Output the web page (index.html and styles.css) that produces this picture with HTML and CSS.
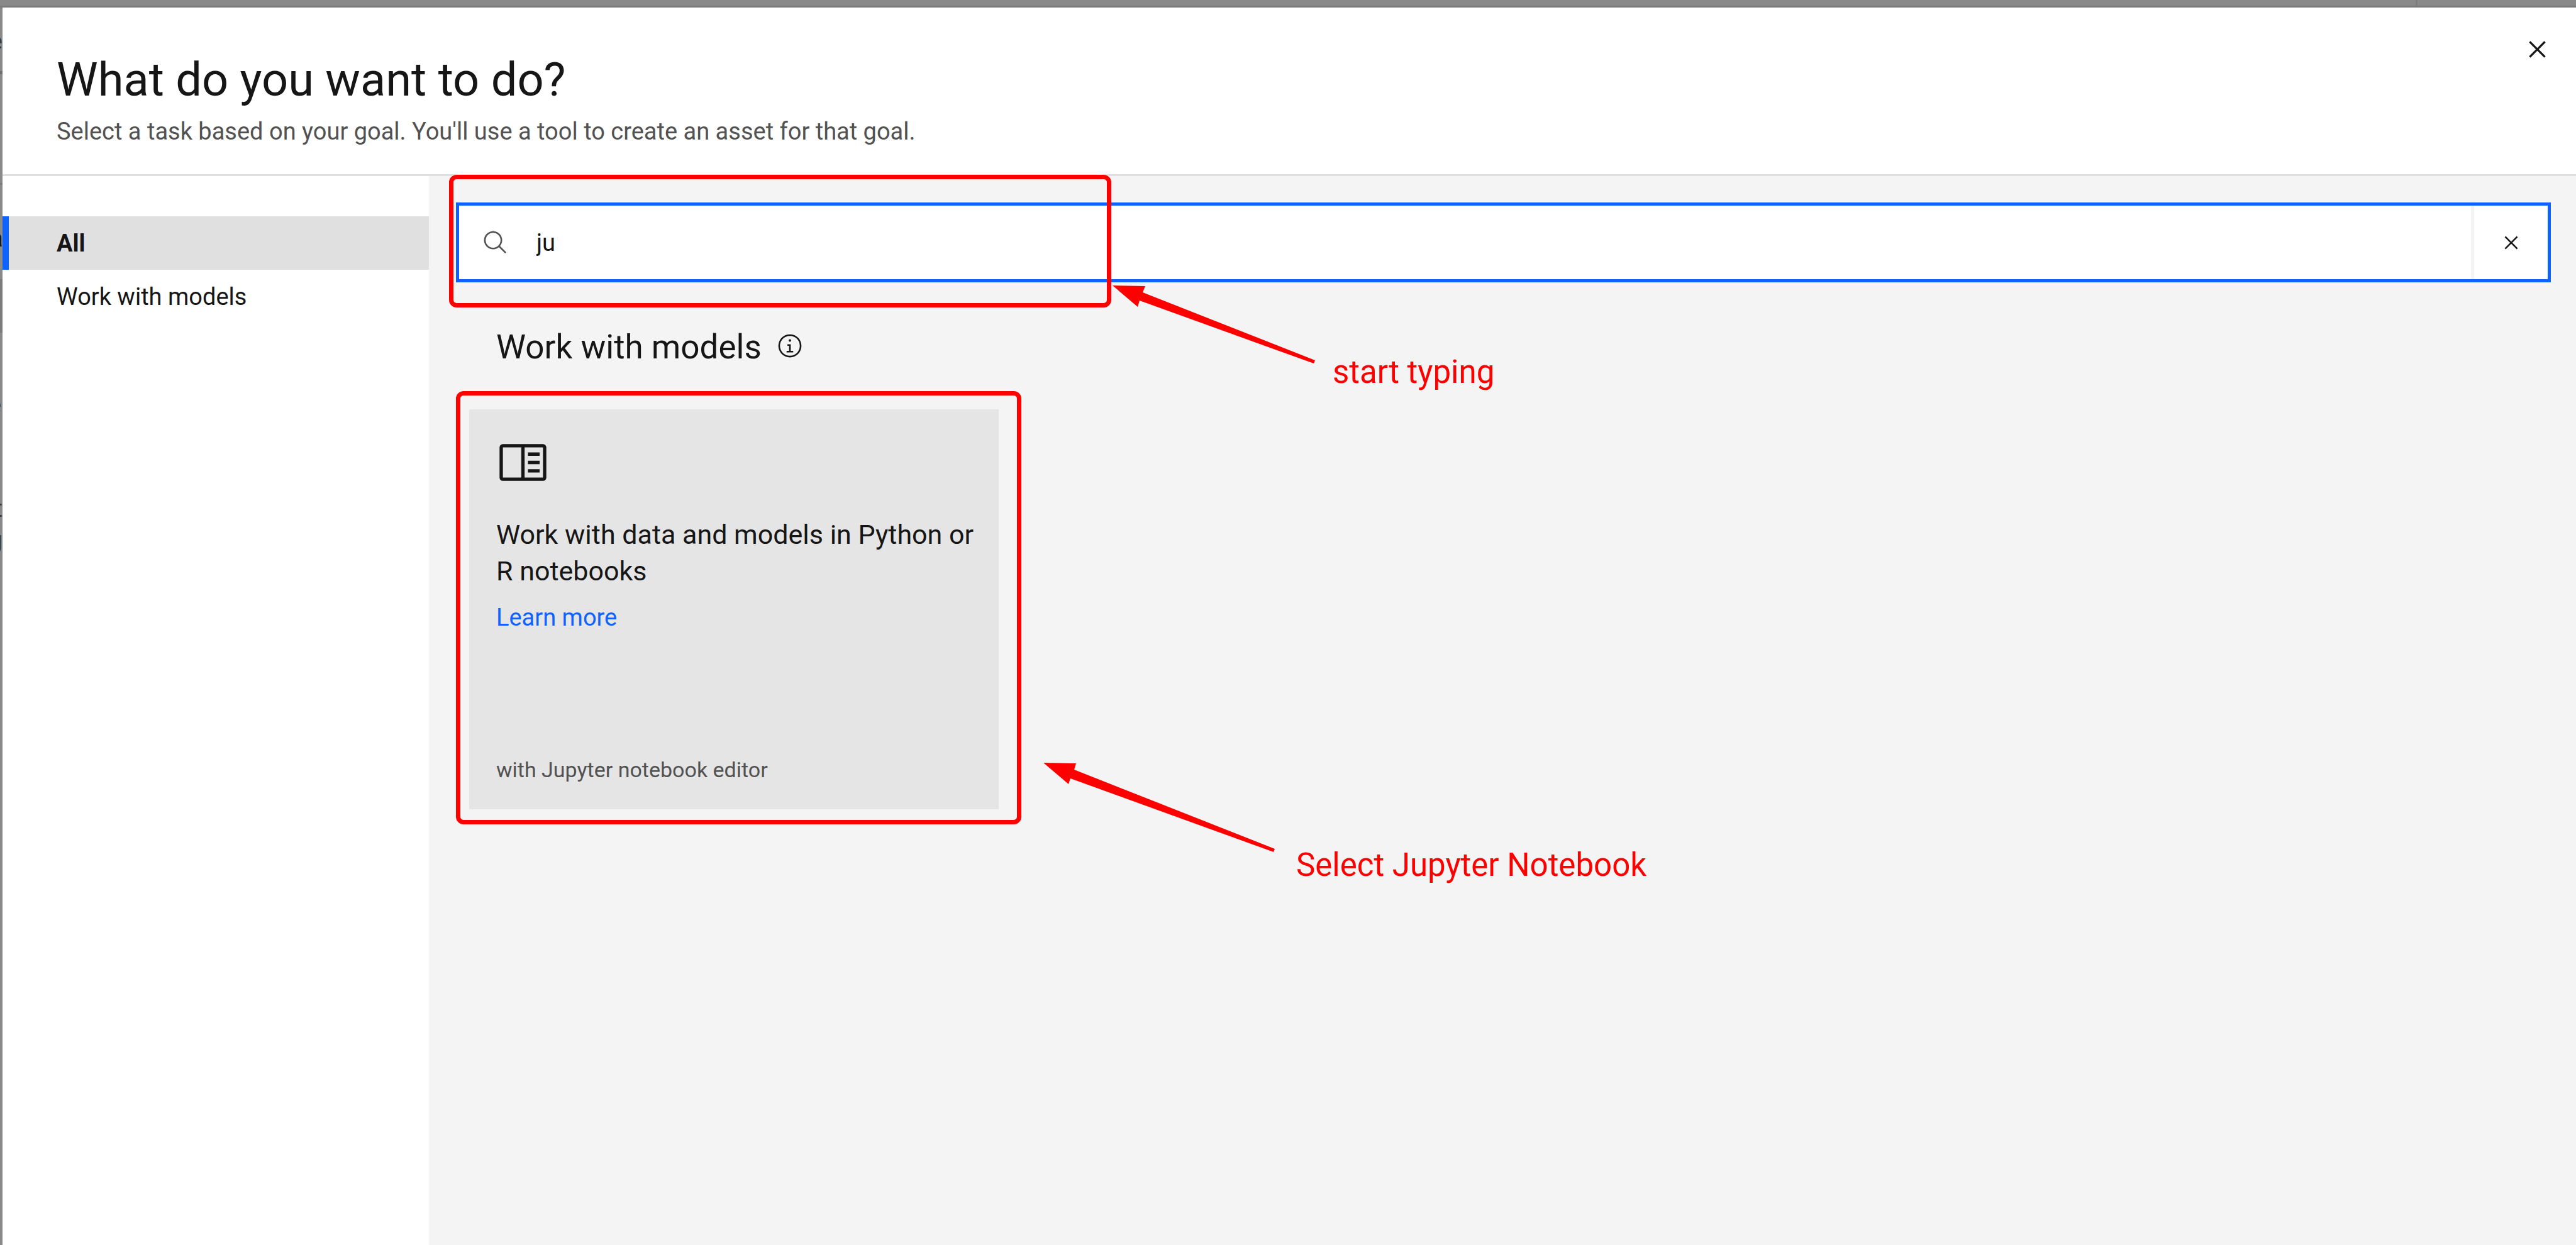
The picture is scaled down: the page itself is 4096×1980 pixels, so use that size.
FILE: index.html
```html
<!DOCTYPE html>
<html lang="en">
<head>
<meta charset="utf-8">
<title>What do you want to do?</title>
<link rel="stylesheet" href="styles.css">
</head>
<body>
<div class="backdrop" aria-hidden="true">
  <div class="backdrop-bar"></div>
  <div class="backdrop-edge">
    <div class="edge-rule edge-rule-thick"></div>
    <div class="edge-rule"></div>
    <div class="edge-row"></div>
    <span class="edge-text edge-soft edge-1">e</span>
    <span class="edge-text edge-bold edge-2">a</span>
    <span class="edge-text edge-in edge-3">n</span>
    <span class="edge-text edge-in edge-4">e</span>
    <span class="edge-text edge-soft edge-5">t</span>
    <span class="edge-text edge-soft edge-6">g</span>
  </div>
</div>

<div class="modal" role="dialog" aria-labelledby="modal-title">
  <header class="modal-header">
    <div class="modal-heading">
      <h1 class="modal-title" id="modal-title">What do you want to do?</h1>
      <p class="modal-subtitle">Select a task based on your goal. You'll use a tool to create an asset for that goal.</p>
    </div>
    <button class="icon-button close-button" type="button" aria-label="Close">
      <svg class="icon-large" viewBox="0 0 32 32"><path d="M24 9.4 22.6 8 16 14.6 9.4 8 8 9.4 14.6 16 8 22.6 9.4 24 16 17.4 22.6 24 24 22.6 17.4 16z"/></svg>
    </button>
  </header>

  <div class="modal-body">
    <nav class="sidebar" aria-label="Tasks">
      <a class="nav-item nav-item-active" href="#all" aria-current="page">All</a>
      <a class="nav-item" href="#models">Work with models</a>
    </nav>

    <main class="content">
      <div class="search">
        <label class="search-label" for="task-search" aria-label="Search tasks">
          <svg class="icon" viewBox="0 0 32 32"><path d="M29 27.586l-7.552-7.552a11.018 11.018 0 1 0-1.414 1.414L27.586 29zM4 13a9 9 0 1 1 9 9 9.01 9.01 0 0 1-9-9z"/></svg>
        </label>
        <input class="search-input" id="task-search" type="text" value="ju">
        <button class="icon-button clear-button" type="button" aria-label="Clear search">
          <svg class="icon" viewBox="0 0 32 32"><path d="M24 9.4 22.6 8 16 14.6 9.4 8 8 9.4 14.6 16 8 22.6 9.4 24 16 17.4 22.6 24 24 22.6 17.4 16z"/></svg>
        </button>
      </div>

      <section class="group" id="models">
        <div class="group-header">
          <h2 class="group-title">Work with models</h2>
          <button class="icon-button info-button" type="button" aria-label="About this group">
            <svg class="icon" viewBox="0 0 32 32"><path d="M17 22v-8h-4v2h2v6h-3v2h8v-2z"/><circle cx="16" cy="9.5" r="1.5"/><path d="M16 30a14 14 0 1 1 14-14 14 14 0 0 1-14 14zm0-26a12 12 0 1 0 12 12A12 12 0 0 0 16 4z"/></svg>
          </button>
        </div>
        <article class="card">
          <svg class="card-icon" viewBox="0 0 32 32" aria-hidden="true"><path d="M19 10h7v2h-7zM19 15h7v2h-7zM19 20h7v2h-7z"/><path d="M28 5H4a2 2 0 0 0-2 2v18a2 2 0 0 0 2 2h24a2 2 0 0 0 2-2V7a2 2 0 0 0-2-2zM4 7h11v18H4zm13 18V7h11v18z"/></svg>
          <h3 class="card-title">Work with data and models in Python or R notebooks</h3>
          <a class="card-link" href="#learn-more">Learn more</a>
          <p class="card-footer">with Jupyter notebook editor</p>
        </article>
      </section>
    </main>
  </div>
</div>

<div class="notes">
  <div class="note-box note-box-search"></div>
  <div class="note-box note-box-card"></div>
  <svg class="note-arrow note-arrow-search" viewBox="0 0 322 125" aria-hidden="true"><path d="M0 1 52 2 48 12 322 120 320 125 43 25 40 35z"/></svg>
  <svg class="note-arrow note-arrow-card" viewBox="0 0 368 142" aria-hidden="true"><path d="M0 0 52 1 49 11 368 137 366 142 43 25 40 34z"/></svg>
  <p class="note-text note-text-search">start typing</p>
  <p class="note-text note-text-card">Select Jupyter Notebook</p>
</div>
</body>
</html>
```
FILE: styles.css
```css
* {
  box-sizing: border-box;
}

body {
  position: relative;
  margin: 0;
  background: #8a8a8a;
  color: #161616;
  font-family: Roboto, "Liberation Sans", sans-serif;
  font-size: 38px;
  line-height: 50px;
}

h1, h2, h3, p {
  margin: 0;
  font-weight: 400;
}

svg {
  display: block;
  fill: currentColor;
}

/* Dimmed page behind the dialog */
.backdrop-bar {
  position: absolute;
  top: 0;
  left: 0;
  right: 0;
  height: 12px;
  border-bottom: 3px solid #7b7b7b;
  background: linear-gradient(#7f7f7f, #7f7f7f) right 252px top / 3px 100% no-repeat #898989;
}

.backdrop-edge {
  position: absolute;
  top: 12px;
  left: 0;
  width: 4px;
  height: 1000px;
  overflow: hidden;
}

.edge-rule,
.edge-row {
  position: absolute;
  top: 279px;
  width: 100%;
  height: 3px;
  background: #7b7b7b;
}

.edge-rule-thick {
  top: 101px;
  height: 5px;
  background: #6e6e6e;
}

.edge-row {
  top: 432px;
  height: 85px;
}

.edge-text {
  position: absolute;
  right: 0;
}

.edge-in { right: 2px; }
.edge-soft { color: #3a3a3a; }
.edge-bold { font-weight: 700; }
.edge-1 { top: 29px; }
.edge-2 { top: 342px; }
.edge-3 { top: 432px; }
.edge-4 { top: 607px; }
.edge-5 { top: 772px; }
.edge-6 { top: 822px; }

/* Dialog */
.modal {
  position: relative;
  display: flex;
  flex-direction: column;
  min-height: 100vh;
  border-top: 12px solid transparent;
  border-left: 4px solid transparent;
  background: #fff;
  background-clip: padding-box;
}

.modal-header {
  display: flex;
  justify-content: space-between;
  align-items: flex-start;
  border-bottom: 3px solid #e0e0e0;
}

.modal-heading {
  padding: 70px 0 43px 86px;
}

.modal-title {
  margin-bottom: 12px;
  font-size: 74px;
  line-height: 90px;
}

.modal-subtitle {
  color: #525252;
}

.icon-button {
  display: flex;
  align-items: center;
  justify-content: center;
  padding: 0;
  border: 0;
  background: none;
  color: #161616;
}

.icon {
  width: 42px;
  height: 42px;
}

.icon-large {
  width: 53px;
  height: 53px;
}

.close-button {
  width: 124px;
  height: 132px;
}

.modal-body {
  display: flex;
  flex: 1;
}

/* Task list */
.sidebar {
  flex: 0 0 678px;
  padding-top: 64px;
}

.nav-item {
  display: flex;
  align-items: center;
  height: 85px;
  padding-left: 76px;
  border-left: 10px solid transparent;
  color: #161616;
  text-decoration: none;
}

.nav-item-active {
  border-left-color: #0f62fe;
  background: #e0e0e0;
  font-weight: 700;
}

/* Search and results */
.content {
  flex: 1;
  padding: 42px 40px 42px 43px;
  background: #f4f4f4;
}

.search {
  display: flex;
  height: 127px;
  border: 5px solid #0f62fe;
  background: #fff;
}

.search-label {
  display: flex;
  align-items: center;
  padding: 0 44px 0 37px;
  color: #525252;
}

.search-input {
  flex: 1;
  min-width: 0;
  padding: 0;
  border: 0;
  outline: 0;
  background: none;
  color: #161616;
  font: inherit;
}

.clear-button {
  width: 122px;
  border-left: 5px solid #f4f4f4;
}

.group {
  padding-top: 70px;
}

.group-header {
  display: flex;
  gap: 24px;
  padding-left: 64px;
}

.group-title {
  font-size: 53px;
  line-height: 66px;
}

.info-button {
  height: 62px;
}

.card {
  display: flex;
  flex-direction: column;
  align-items: flex-start;
  width: 842px;
  min-height: 636px;
  margin: 66px 0 0 21px;
  padding: 42px 32px 41px 43px;
  background: #e5e5e5;
}

.card-icon {
  width: 85px;
  height: 85px;
}

.card-title {
  margin: 43px 0 20px;
  font-size: 43px;
  line-height: 58px;
}

.card-link {
  color: #0f62fe;
  text-decoration: none;
}

.card-footer {
  margin-top: auto;
  color: #525252;
  font-size: 34px;
  line-height: 44px;
}

/* Red notes drawn over the dialog */
.notes {
  position: absolute;
  top: 0;
  left: 0;
  color: #f00;
}

.note-box,
.note-arrow,
.note-text {
  position: absolute;
}

.note-box {
  border: 7px solid #f00;
  border-radius: 12px;
}

.note-box-search {
  top: 278px;
  left: 714px;
  width: 1053px;
  height: 211px;
}

.note-box-card {
  top: 622px;
  left: 725px;
  width: 899px;
  height: 689px;
}

.note-arrow-search {
  top: 453px;
  left: 1769px;
  width: 322px;
  height: 125px;
}

.note-arrow-card {
  top: 1213px;
  left: 1659px;
  width: 368px;
  height: 142px;
}

.note-text {
  font-size: 51px;
  line-height: 60px;
  white-space: nowrap;
}

.note-text-search {
  top: 562px;
  left: 2119px;
}

.note-text-card {
  top: 1346px;
  left: 2061px;
}
```
